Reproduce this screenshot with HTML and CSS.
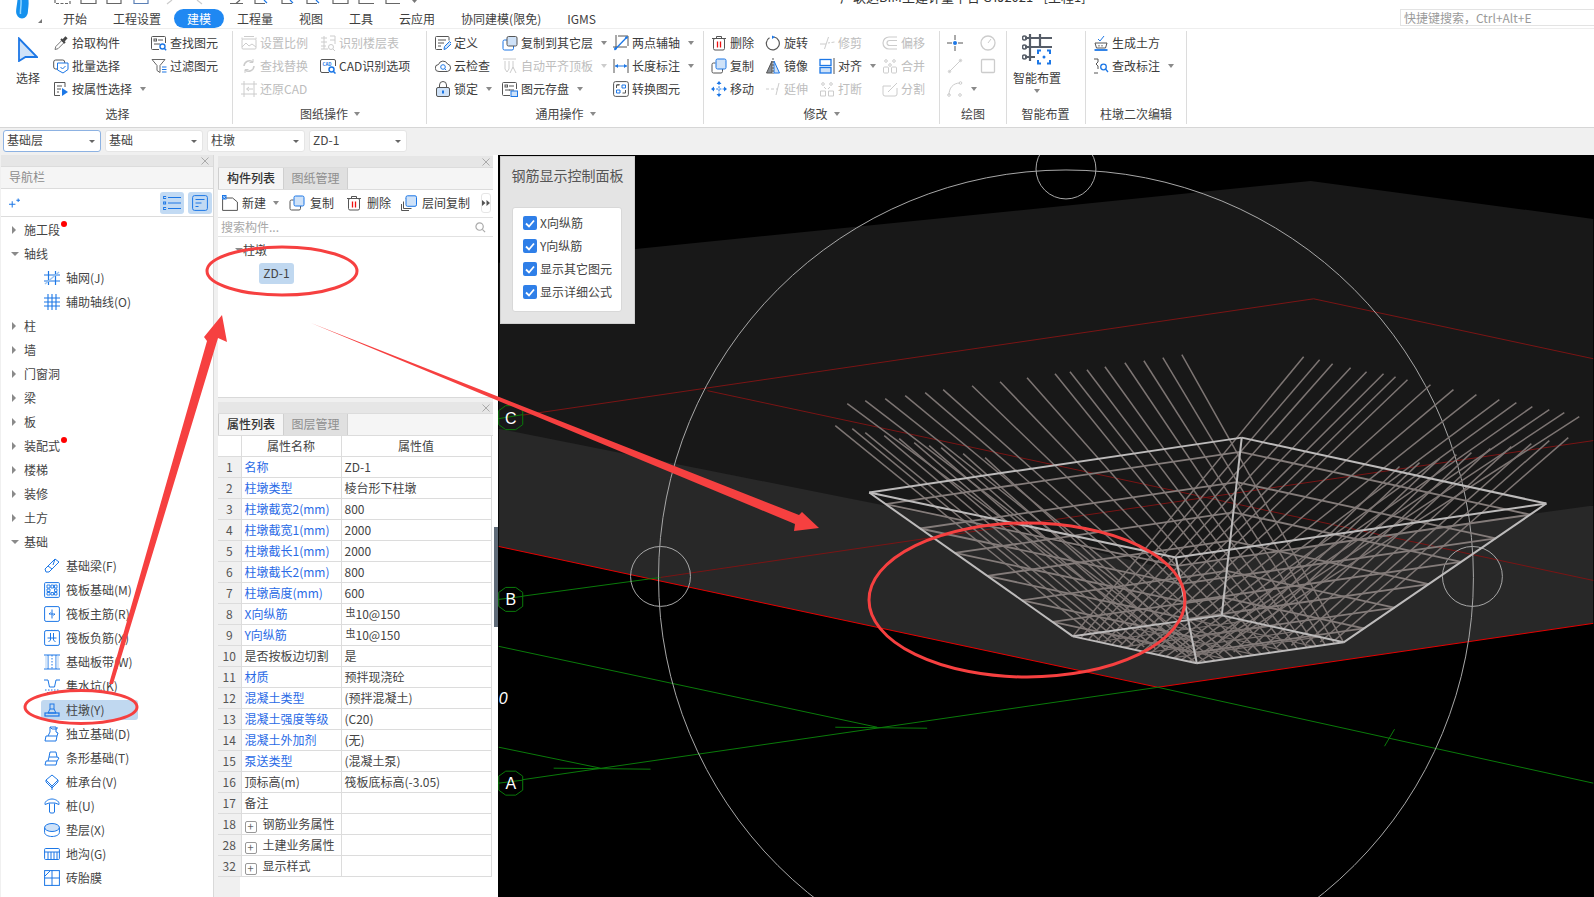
FILE: index.html
```html
<!DOCTYPE html>
<html lang="zh-CN">
<head>
<meta charset="utf-8">
<title>GTJ2021</title>
<link rel="stylesheet" href="styles.css">
</head>
<body>
<svg class="sprite" xmlns="http://www.w3.org/2000/svg">
<symbol id="i-close" viewBox="0 0 8 8"><path d="M.5 .5l7 7M7.500 .5l-7 7" stroke="#aaa" stroke-width="1"/></symbol>
<symbol id="i-pick" viewBox="0 0 16 16"><path d="M2 14.5l.8-3 6-6 2.2 2.2-6 6z" stroke="#777"/><path d="M8 4l4 4" stroke="#444" stroke-width="2"/><path d="M10.5 5.5l3-3.2" stroke="#444" stroke-width="3"/></symbol>
<symbol id="i-batch" viewBox="0 0 16 16"><rect x=".7" y="2" width="11" height="9" rx="2" stroke="#555"/><path d="M4.5 5h10.5v6.5L10 15l-5.5-3z" fill="#fff" stroke="#1c77e6"/><path d="M7.5 9l2 2 3-3" stroke="#1c77e6"/></symbol>
<symbol id="i-attr" viewBox="0 0 16 16"><path d="M12 6V1.5H1.5v13H7" stroke="#555"/><path d="M4 5h5M4 8h4M4 11h2" stroke="#555"/><path d="M9 7l6 4-6 4z" fill="#1c77e6"/></symbol>
<symbol id="i-find" viewBox="0 0 16 16"><path d="M8 14.5H1.5a1 1 0 0 1-1-1v-11a1 1 0 0 1 1-1h12a1 1 0 0 1 1 1V8" stroke="#555"/><rect x="3" y="4" width="2.5" height="2" stroke="#555"/><path d="M7 5h5M3 9h6" stroke="#555"/><circle cx="11.5" cy="11.5" r="2.5" stroke="#1c77e6" stroke-width="1.4"/><path d="M13.2 13.2l2 2" stroke="#1c77e6" stroke-width="1.4"/></symbol>
<symbol id="i-filter" viewBox="0 0 16 16"><path d="M1 1.5h13L9 7.5v7l-3-2v-5z" stroke="#666"/><path d="M11 9h4.500M11 11.500h4.500M11 14h4.500" stroke="#1c77e6" stroke-width="1.200"/></symbol>
<symbol id="i-scale" viewBox="0 0 16 16"><path d="M1 4V2.500M15 4V2.500M3 1.500h10" stroke="#ccc"/><rect x="1" y="4" width="14" height="10" rx="1" stroke="#ccc"/><path d="M1 12l4-4 3 3 3-2 4 3" stroke="#ccc"/></symbol>
<symbol id="i-floor" viewBox="0 0 16 16"><path d="M1 3h6M1 7h6M1 11h5M4 1v13M1 14h7M10 1h5v8M10 5h5" stroke="#ccc"/><circle cx="11" cy="12" r="2.500" stroke="#ccc"/><path d="M13 14l2 2" stroke="#ccc"/></symbol>
<symbol id="i-replace" viewBox="0 0 16 16"><path d="M3 8a5.500 5.500 0 0 1 9-4M13 8a5.500 5.500 0 0 1-9 4" stroke="#ccc" stroke-width="1.500"/><path d="M12 1v3.500H8.500M4 15v-3.500h3.500" stroke="#ccc"/></symbol>
<symbol id="i-cad" viewBox="0 0 16 16"><path d="M9 14.500H2a1.500 1.500 0 0 1-1.500-1.500V3A1.500 1.500 0 0 1 2 1.500h12A1.500 1.500 0 0 1 15.500 3v5" stroke="#555"/><text x="2.500" y="7.500" class="tiny">CAD</text><circle cx="11.500" cy="11.500" r="2.500" stroke="#1c77e6" stroke-width="1.500"/><path d="M13.200 13.200l2.300 2.300" stroke="#1c77e6" stroke-width="1.500"/></symbol>
<symbol id="i-restore" viewBox="0 0 16 16"><path d="M3 0v16M13 0v16M0 3h16M0 13h16M6 8h6M8 6l-2.500 2L8 10" stroke="#ccc"/></symbol>
<symbol id="i-def" viewBox="0 0 16 16"><path d="M14 5.500V2.500a1 1 0 0 0-1-1H1.500a1 1 0 0 0-1 1v11a1 1 0 0 0 1 1H7" stroke="#555"/><path d="M3 5h8M3 8h6M3 11h3" stroke="#555"/><path d="M9 14.500l.5-3 5-5 2 2-5 5z" fill="#cfe2f8" stroke="#1c77e6"/></symbol>
<symbol id="i-cloud" viewBox="0 0 16 16"><path d="M4 13.500a3.500 3.500 0 0 1-.5-7A4.800 4.800 0 0 1 12.500 6a3.800 3.800 0 0 1-.3 7.500z" stroke="#555"/><circle cx="8" cy="9" r="2.300" stroke="#1c77e6"/><path d="M9.700 10.700l1.500 1.500" stroke="#1c77e6"/></symbol>
<symbol id="i-lock" viewBox="0 0 16 16"><rect x="1.500" y="6.500" width="13" height="9" rx="1.500" fill="#cfe2f8" stroke="#555"/><path d="M4.500 6.500V4a3.500 3.500 0 0 1 7 0v2.500" stroke="#555"/><rect x="7" y="9.500" width="2" height="3" fill="#1c77e6"/></symbol>
<symbol id="i-copyto" viewBox="0 0 16 16"><path d="M5 5H2.500A1.500 1.500 0 0 0 1 6.500v7A1.500 1.500 0 0 0 2.500 15H10a1.500 1.500 0 0 0 1.500-1.500V11" stroke="#1c77e6"/><rect x="5" y="1.500" width="10" height="9.500" rx="1.500" fill="#cfe2f8" stroke="#555"/></symbol>
<symbol id="i-auto" viewBox="0 0 16 16"><path d="M1 1h13M3 3v8M7 3v8M11 3v8" stroke="#ccc"/><path d="M3 11l2 3 2-3M8 15l3-6 3 6" stroke="#ccc"/></symbol>
<symbol id="i-save" viewBox="0 0 16 16"><path d="M8 14.500H1.500a1 1 0 0 1-1-1v-11a1 1 0 0 1 1-1h12a1 1 0 0 1 1 1V8" stroke="#555"/><rect x="3" y="4" width="2.500" height="2" stroke="#555"/><path d="M7 5h5M3 9h5M7 9h5" stroke="#555"/><rect x="9" y="10" width="6.500" height="5.500" fill="#cfe2f8" stroke="#1c77e6"/></symbol>
<symbol id="i-two" viewBox="0 0 16 16"><path d="M3 0v14M0 12h14" stroke="#555"/><path d="M1.500 15L14 2" stroke="#1c77e6" stroke-width="1.300"/><path d="M5 1h10v10M3 3.500" stroke="#555"/><circle cx="2.500" cy="13.500" r="1.300" fill="#1c77e6"/><circle cx="13.500" cy="2.500" r="1.300" fill="#1c77e6"/></symbol>
<symbol id="i-len" viewBox="0 0 16 16"><path d="M1 1v14M15 1v14" stroke="#555"/><path d="M2 8h12" stroke="#1c77e6"/><path d="M2 8l3-2v4zM14 8l-3-2v4z" fill="#1c77e6"/></symbol>
<symbol id="i-conv" viewBox="0 0 16 16"><rect x=".6" y=".6" width="14.800" height="14.800" rx="2" stroke="#555"/><path d="M3.500 7V4h3M3.500 4l3-.5M12.500 9v3h-3" stroke="#555"/><path d="M9 4h3.500v3h-3.500zM3.500 9H7v3H3.500z" stroke="#1c77e6"/></symbol>
<symbol id="i-del" viewBox="0 0 16 16"><path d="M1 3.500h14M5.500 3.500V1.500h5v2" stroke="#555"/><rect x="2.500" y="3.500" width="11" height="11.500" rx="1.500" stroke="#555"/><path d="M6.500 6.500v6M9.500 6.500v6" stroke="#e11" stroke-width="1.300"/></symbol>
<symbol id="i-rot" viewBox="0 0 16 16"><path d="M9 2a6.500 6.500 0 1 1-4.500.8" stroke="#555" stroke-width="1.200"/><path d="M7 .5l3 1.500-3 2z" fill="#1c77e6"/></symbol>
<symbol id="i-trim" viewBox="0 0 16 16"><path d="M1 9h6M9 8l2-.3M12.500 7.500l3-.5M9.500 2l-4 12" stroke="#ccc"/></symbol>
<symbol id="i-off" viewBox="0 0 16 16"><path d="M15 2H7a6 6 0 0 0 0 12h8M15 5.500H7.500a2.500 2.500 0 0 0 0 5H15" stroke="#ccc" stroke-width="1.200"/></symbol>
<symbol id="i-copy" viewBox="0 0 16 16"><path d="M4.500 5H2.500A1.500 1.500 0 0 0 1 6.500v7A1.500 1.500 0 0 0 2.500 15H10a1.500 1.500 0 0 0 1.500-1.500V11" stroke="#555"/><rect x="5" y="1" width="10" height="10" rx="1.500" fill="#cfe2f8" stroke="#1c77e6"/></symbol>
<symbol id="i-mir" viewBox="0 0 16 16"><path d="M7 3L1.500 15H7z" fill="#8a8f96" stroke="#555"/><path d="M9 3l5.500 12H9z" fill="#cfe2f8" stroke="#1c77e6"/><path d="M8 0v16" stroke="#555" stroke-dasharray="2 1"/></symbol>
<symbol id="i-align" viewBox="0 0 16 16"><rect x="1" y="1.500" width="11" height="6" fill="#fff" stroke="#1c77e6" stroke-width="1.300"/><rect x="1" y="9.500" width="11" height="5.500" fill="#cfe2f8" stroke="#1c77e6" stroke-width="1.300"/><path d="M15 0v16" stroke="#555"/></symbol>
<symbol id="i-merge" viewBox="0 0 16 16"><circle cx="4" cy="3" r="1.300" stroke="#ccc"/><circle cx="12" cy="3" r="1.300" stroke="#ccc"/><circle cx="8" cy="7" r="1.300" stroke="#ccc"/><rect x="1.500" y="9" width="5" height="6" rx="1" stroke="#ccc"/><rect x="9.500" y="9" width="5" height="6" rx="1" stroke="#ccc"/></symbol>
<symbol id="i-move" viewBox="0 0 16 16"><path d="M8 2v12M2 8h12" stroke="#1c77e6" stroke-dasharray="2 1.200"/><path d="M8 0l2.500 3h-5zM8 16l-2.500-3h5zM0 8l3-2.500v5zM16 8l-3 2.500v-5z" fill="#1c77e6"/></symbol>
<symbol id="i-ext" viewBox="0 0 16 16"><path d="M1 8h3M6 8h3M11 8h2M14 2l-3 12" stroke="#ccc"/></symbol>
<symbol id="i-brk" viewBox="0 0 16 16"><circle cx="4" cy="3" r="1.300" stroke="#ccc"/><circle cx="12" cy="3" r="1.300" stroke="#ccc"/><path d="M1.500 10h5v5h-5zM9.500 10h5v5h-5z" stroke="#ccc"/><path d="M5 6l2 2M11 6L9 8" stroke="#ccc"/></symbol>
<symbol id="i-spl" viewBox="0 0 16 16"><path d="M15 7v6a2 2 0 0 1-2 2H3a2 2 0 0 1-2-2V5h8" stroke="#ccc"/><path d="M6 11l9-9" stroke="#ccc"/></symbol>
<symbol id="i-pt" viewBox="0 0 16 16"><path d="M8 0v5M8 11v5M0 8h5M11 8h5" stroke="#555"/><circle cx="8" cy="8" r="2" fill="#1c77e6"/></symbol>
<symbol id="i-cir" viewBox="0 0 16 16"><circle cx="8" cy="8" r="7" stroke="#ccc" stroke-width="1.300"/><path d="M8 8l3-4" stroke="#ccc"/></symbol>
<symbol id="i-lin" viewBox="0 0 16 16"><path d="M2 14L14 2" stroke="#ccc"/><circle cx="2.500" cy="13.500" r="1.200" stroke="#ccc"/><circle cx="13.500" cy="2.500" r="1.200" stroke="#ccc"/></symbol>
<symbol id="i-rec" viewBox="0 0 16 16"><rect x="1.500" y="1.500" width="13" height="13" rx="1" stroke="#ccc" stroke-width="1.300"/></symbol>
<symbol id="i-arc" viewBox="0 0 16 16"><path d="M2 14C2 7 6 2 13 2" stroke="#ccc"/><circle cx="2" cy="14" r="1.300" stroke="#ccc"/><circle cx="13.500" cy="2" r="1.300" stroke="#ccc"/><circle cx="13" cy="14" r="1.300" stroke="#ccc"/></symbol>
<symbol id="i-smart" viewBox="0 0 30 32"><path d="M8 0v27M18 0v12M3 4h27M3 13h27M3 23h10" stroke="#565d68" stroke-width="2.200"/><circle cx="2.500" cy="4" r="2" stroke="#565d68" stroke-width="1.500"/><circle cx="2.500" cy="13" r="2" stroke="#565d68" stroke-width="1.500"/><circle cx="2.500" cy="23" r="2" stroke="#565d68" stroke-width="1.500"/><path d="M16 20v-3.500h3M25 16.500h3v3.500M28 26v3.500h-3M19 29.500h-3V26" stroke="#1c77e6" stroke-width="2"/><circle cx="22" cy="23" r="1.500" fill="#1c77e6"/></symbol>
<symbol id="i-earth" viewBox="0 0 16 16"><path d="M2 8h12l-1.500 5h-9z" stroke="#555"/><path d="M1.500 15h13" stroke="#1c77e6" stroke-width="1.800"/><path d="M5 4l2 2 4-5" stroke="#1c77e6"/><path d="M6 10v1.500M9 10v1.500" stroke="#555"/></symbol>
<symbol id="i-mark" viewBox="0 0 16 16"><path d="M1 1h4v3l-2 2 2 2v3M5 15H1" stroke="#555"/><circle cx="10.500" cy="9" r="2.800" stroke="#1c77e6" stroke-width="1.300"/><path d="M12.500 11l2.500 3" stroke="#1c77e6" stroke-width="1.300"/></symbol>
<symbol id="i-axis" viewBox="0 0 16 16"><path d="M4.500 1v14M11.500 1v14M0 5h16M0 11h16" stroke="#1c77e6" stroke-width="1.200"/><path d="M1 14L15 2" stroke="#9cc3ef" stroke-width="1.500"/></symbol>
<symbol id="i-aux" viewBox="0 0 16 16"><path d="M4 0v16M8 0v16M12 0v16M0 4h16M0 8h16M0 12h16" stroke="#1c77e6" stroke-width="1.100"/></symbol>
<symbol id="i-beam" viewBox="0 0 16 16"><path d="M1 11L11 1l4 3-10 10H2zM11 1l-2 6M4 8l4 3" stroke="#1c77e6"/></symbol>
<symbol id="i-raft" viewBox="0 0 16 16"><rect x=".6" y=".6" width="14.800" height="14.800" rx="1" stroke="#1c77e6"/><path d="M3 3h3v3H3zM7 3h2.500v3H7zM10.500 3h2.500v3h-2.500zM3 7h3v2.500H3zM10.500 7h2.500v2.500h-2.500zM3 10.500h3V13H3zM7 10.500h2.500V13H7zM10.500 10.500h2.500V13h-2.500z" stroke="#1c77e6" stroke-width=".9"/></symbol>
<symbol id="i-main" viewBox="0 0 16 16"><rect x=".6" y=".6" width="14.800" height="14.800" rx="1.500" stroke="#1c77e6"/><path d="M8 3.500v9M5 8h6M5 8l1.500-1.500M11 8L9.500 9.500" stroke="#1c77e6"/></symbol>
<symbol id="i-neg" viewBox="0 0 16 16"><rect x=".6" y=".6" width="14.800" height="14.800" rx="1.500" stroke="#1c77e6"/><path d="M6.500 3v7l-2 2M9.500 3v7l2 2M3.500 8h9" stroke="#1c77e6"/></symbol>
<symbol id="i-band" viewBox="0 0 16 16"><path d="M0 1h16M0 15h16M4 1v14M12 1v14" stroke="#1c77e6"/><path d="M8 1v14" stroke="#1c77e6" stroke-dasharray="1.500 1.500"/><path d="M1 2h2.500v12H1zM12.500 2H15v12h-2.500z" fill="#d7e7f9"/></symbol>
<symbol id="i-pit" viewBox="0 0 16 16"><path d="M0 2h4l1.500 7h5L12 2h4" stroke="#1c77e6"/><path d="M1 12h14M3 14.500h10" stroke="#1c77e6" stroke-dasharray="1.500 1.500"/></symbol>
<symbol id="i-pier" viewBox="0 0 16 16"><rect x="6" y="2" width="4" height="5" stroke="#1c77e6"/><path d="M6 7l-2 4h8l-2-4" stroke="#1c77e6"/><rect x="1" y="11" width="14" height="3" stroke="#1c77e6" stroke-width="1.200"/></symbol>
<symbol id="i-iso" viewBox="0 0 16 16"><path d="M1 15l1-5h11l-1 5zM4 10l2-4V1h6v5l2 1-1 3M6 1l2 2h5v-2" stroke="#1c77e6"/></symbol>
<symbol id="i-strip" viewBox="0 0 16 16"><path d="M1 15l1-4h11l-1 4zM4 11l1-4 1-5h6l1 5 2 1-2 3M5 7h8" stroke="#1c77e6"/></symbol>
<symbol id="i-cap" viewBox="0 0 16 16"><path d="M8 1l6 5-6 6-6-6zM2 6v2l6 6 6-6V6M8 12v4" stroke="#1c77e6"/></symbol>
<symbol id="i-pile" viewBox="0 0 16 16"><path d="M1 5.500C1 3 5 1 8 1s7 2 7 4.500v1L11 5H5L1 6.500zM5.500 5.500V14a1.500 1.500 0 0 0 1.500 1h2a1.500 1.500 0 0 0 1.500-1V5.500" stroke="#1c77e6"/></symbol>
<symbol id="i-pad" viewBox="0 0 16 16"><ellipse cx="8" cy="5.500" rx="7.400" ry="4" fill="#cfe2f8" stroke="#1c77e6"/><path d="M.6 5.500v5c0 2.200 3.300 4 7.400 4s7.400-1.800 7.400-4v-5" stroke="#1c77e6"/></symbol>
<symbol id="i-trench" viewBox="0 0 16 16"><rect x=".6" y="2.500" width="14.800" height="11" rx="1" stroke="#1c77e6"/><path d="M0 6h16M4 6v7M7 6v7M10 6v7M13 6v7" stroke="#1c77e6"/></symbol>
<symbol id="i-brick" viewBox="0 0 16 16"><rect x=".6" y=".6" width="14.800" height="14.800" stroke="#1c77e6"/><path d="M8 0v16M0 8h16" stroke="#1c77e6"/><path d="M1 6l5-5" stroke="#1c77e6"/></symbol>
<symbol id="i-new" viewBox="0 0 16 16"><path d="M.6 3h10l4.800 4v8.400H.6z" stroke="#555"/><rect x="0" y="0" width="4.500" height="4.500" fill="#1c77e6"/><path d="M1 1l2.500 2.500M3.500 1L1 3.500" stroke="#fff" stroke-width=".6"/></symbol>
<symbol id="i-lcopy" viewBox="0 0 16 16"><path d="M2.500 6.500v7h8M.5 9v6.500H8" stroke="#555"/><path d="M5 3.500v-.5" stroke="#555"/><rect x="5" y=".8" width="10.500" height="10.500" rx="1.500" fill="#cfe2f8" stroke="#1c77e6"/></symbol>
<symbol id="i-search" viewBox="0 0 12 12"><circle cx="5" cy="5" r="4" stroke="#aaa" stroke-width="1.300"/><path d="M8 8l3 3" stroke="#aaa" stroke-width="1.300"/></symbol>
<symbol id="i-star" viewBox="0 0 12 12"><path d="M0 8h7M3.500 4.500v7M8 3.500h4M10 1.500v4" stroke="#1c77e6" stroke-width="1.100"/></symbol>
<symbol id="i-list" viewBox="0 0 18 14"><path d="M5 1.500h13M5 7h13M5 12.500h13" stroke="#1c77e6" stroke-width="1.200"/><rect x=".6" y=".5" width="2" height="2" stroke="#1c77e6"/><rect x=".6" y="6" width="2" height="2" stroke="#1c77e6"/><rect x=".6" y="11.500" width="2" height="2" stroke="#1c77e6"/></symbol>
<symbol id="i-form" viewBox="0 0 16 16"><rect x=".6" y=".6" width="14.800" height="14.800" rx="2" stroke="#1c77e6"/><path d="M3.500 4.500h9M3.500 8h6M3.500 11.500h3" stroke="#1c77e6"/></symbol>
<symbol id="i-tick" viewBox="0 0 14 14"><path d="M3 7.500l3 3 5-6" stroke="#fff" stroke-width="1.800"/></symbol>
<symbol id="i-more" viewBox="0 0 8 6"><path d="M0 0l3.500 3L0 6zM4.500 0L8 3 4.500 6z" fill="#555"/></symbol>
</svg>

<div class="app">
  <header class="header">
    <div class="logo-col">
      <svg class="logo" viewBox="0 0 14 20"><path d="M1.500 0h11c.5 5-.5 9-.6 12a5.900 6.500 0 0 1-11.800 0C.000 9 1 5 1.500 0z" fill="#1591ee"/><path d="M5 0c.5 6-1 10-.5 14" stroke="#8fd4ff" stroke-width="1.500" fill="none"/></svg>
      <span class="logo-tri"></span>
    </div>
    <div class="header-main">
      <div class="title-row">
        <svg class="quick" viewBox="0 0 370 8">
          <g fill="none" stroke="#666" stroke-width="1.200">
            <path d="M5 0v3.500h15V0" stroke-dasharray="3 1.500"/><path d="M31 0v3.500h15V0M57 0v3.500h14V0"/><path d="M84 0v3.500h14V0" stroke="#5a7fb5"/>
            <path d="M117 4l5-4M152 4l-5-4" stroke="#ccc"/>
            <path d="M180 3.500h13M186 3.500L190 0M205 0v3.500h10M232 0v3.500h10M257 0v3.500h10M283 0v3.500h15V0M309 0v3.500h15M336 0v3.500h14"/>
            <path d="M214 0l3 3M240 0l3 3M266 0l3 3" stroke="#1c77e6"/>
          </g>
          <path d="M362 0h5l-2.500 3z" fill="#777"/>
        </svg>
        <span class="title">广联达BIM土建计量平台 GTJ2021 - [工程1]</span>
      </div>
      <div class="tabs-row">
        <span class="tab">开始</span><span class="tab">工程设置</span><span class="tab on">建模</span><span class="tab">工程量</span><span class="tab">视图</span><span class="tab">工具</span><span class="tab">云应用</span><span class="tab">协同建模(限免)</span><span class="tab">IGMS</span>
        <span class="quick-search">快捷键搜索，Ctrl+Alt+E</span>
      </div>
    </div>
  </header>

  <section class="ribbon">
    <div class="group g1">
      <div class="group-body">
        <div class="big b-select">
          <svg class="big-ic" viewBox="0 0 20 25" width="20" height="25"><path d="M1 1.500L19 20H7.500L1 24z" fill="#cfe2f8" stroke="#1c77e6" stroke-width="1.800"/></svg>
          <span>选择</span>
        </div>
        <div class="col w98">
          <div class="item"><svg class="ic"><use href="#i-pick"/></svg>拾取构件</div>
          <div class="item"><svg class="ic"><use href="#i-batch"/></svg>批量选择</div>
          <div class="item"><svg class="ic"><use href="#i-attr"/></svg>按属性选择<i class="caret"></i></div>
        </div>
        <div class="col">
          <div class="item"><svg class="ic"><use href="#i-find"/></svg>查找图元</div>
          <div class="item"><svg class="ic"><use href="#i-filter"/></svg>过滤图元</div>
        </div>
      </div>
      <div class="group-label">选择</div>
    </div>

    <div class="group g2">
      <div class="group-body">
        <div class="col w79">
          <div class="item off"><svg class="ic"><use href="#i-scale"/></svg>设置比例</div>
          <div class="item off"><svg class="ic"><use href="#i-replace"/></svg>查找替换</div>
          <div class="item off"><svg class="ic"><use href="#i-restore"/></svg>还原CAD</div>
        </div>
        <div class="col">
          <div class="item off"><svg class="ic"><use href="#i-floor"/></svg>识别楼层表</div>
          <div class="item"><svg class="ic"><use href="#i-cad"/></svg>CAD识别选项</div>
        </div>
      </div>
      <div class="group-label">图纸操作<i class="caret"></i></div>
    </div>

    <div class="group g3">
      <div class="group-body">
        <div class="col w67">
          <div class="item"><svg class="ic"><use href="#i-def"/></svg>定义</div>
          <div class="item"><svg class="ic"><use href="#i-cloud"/></svg>云检查</div>
          <div class="item"><svg class="ic"><use href="#i-lock"/></svg>锁定<i class="caret"></i></div>
        </div>
        <div class="col w111">
          <div class="item"><svg class="ic"><use href="#i-copyto"/></svg>复制到其它层<i class="caret"></i></div>
          <div class="item off"><svg class="ic"><use href="#i-auto"/></svg>自动平齐顶板<i class="caret"></i></div>
          <div class="item"><svg class="ic"><use href="#i-save"/></svg>图元存盘<i class="caret"></i></div>
        </div>
        <div class="col">
          <div class="item"><svg class="ic"><use href="#i-two"/></svg>两点辅轴<i class="caret"></i></div>
          <div class="item"><svg class="ic"><use href="#i-len"/></svg>长度标注<i class="caret"></i></div>
          <div class="item"><svg class="ic"><use href="#i-conv"/></svg>转换图元</div>
        </div>
      </div>
      <div class="group-label">通用操作<i class="caret"></i></div>
    </div>

    <div class="group g4">
      <div class="group-body">
        <div class="col w54">
          <div class="item"><svg class="ic"><use href="#i-del"/></svg>删除</div>
          <div class="item"><svg class="ic"><use href="#i-copy"/></svg>复制</div>
          <div class="item"><svg class="ic"><use href="#i-move"/></svg>移动</div>
        </div>
        <div class="col w54">
          <div class="item"><svg class="ic"><use href="#i-rot"/></svg>旋转</div>
          <div class="item"><svg class="ic"><use href="#i-mir"/></svg>镜像</div>
          <div class="item off"><svg class="ic"><use href="#i-ext"/></svg>延伸</div>
        </div>
        <div class="col w63">
          <div class="item off"><svg class="ic"><use href="#i-trim"/></svg>修剪</div>
          <div class="item"><svg class="ic"><use href="#i-align"/></svg>对齐<i class="caret"></i></div>
          <div class="item off"><svg class="ic"><use href="#i-brk"/></svg>打断</div>
        </div>
        <div class="col">
          <div class="item off"><svg class="ic"><use href="#i-off"/></svg>偏移</div>
          <div class="item off"><svg class="ic"><use href="#i-merge"/></svg>合并</div>
          <div class="item off"><svg class="ic"><use href="#i-spl"/></svg>分割</div>
        </div>
      </div>
      <div class="group-label">修改<i class="caret"></i></div>
    </div>

    <div class="group g5">
      <div class="group-body">
        <div class="col w33">
          <div class="item"><svg class="ic"><use href="#i-pt"/></svg></div>
          <div class="item"><svg class="ic"><use href="#i-lin"/></svg></div>
          <div class="item"><svg class="ic"><use href="#i-arc"/></svg><i class="caret"></i></div>
        </div>
        <div class="col">
          <div class="item"><svg class="ic"><use href="#i-cir"/></svg></div>
          <div class="item"><svg class="ic"><use href="#i-rec"/></svg></div>
        </div>
      </div>
      <div class="group-label">绘图</div>
    </div>

    <div class="group g6">
      <div class="group-body">
        <div class="big b-smart">
          <svg class="big-ic" width="30" height="32"><use href="#i-smart"/></svg>
          <span>智能布置</span>
          <i class="caret"></i>
        </div>
      </div>
      <div class="group-label">智能布置</div>
    </div>

    <div class="group g7">
      <div class="group-body">
        <div class="col">
          <div class="item"><svg class="ic"><use href="#i-earth"/></svg>生成土方</div>
          <div class="item"><svg class="ic"><use href="#i-mark"/></svg>查改标注<i class="caret"></i></div>
        </div>
      </div>
      <div class="group-label">柱墩二次编辑</div>
    </div>
  </section>

  <section class="selectors">
    <div class="dd focus">基础层<i class="caret"></i></div>
    <div class="dd">基础<i class="caret"></i></div>
    <div class="dd">柱墩<i class="caret"></i></div>
    <div class="dd">ZD-1<i class="caret"></i></div>
  </section>

  <main class="main">
    <aside class="nav">
      <div class="strip"><svg width="8" height="8"><use href="#i-close"/></svg></div>
      <div class="nav-title">导航栏</div>
      <div class="nav-tools">
        <svg class="star" width="11" height="11"><use href="#i-star"/></svg>
        <span class="nav-toggles">
          <span class="toggle"><svg width="18" height="14"><use href="#i-list"/></svg></span>
          <span class="toggle"><svg width="16" height="16"><use href="#i-form"/></svg></span>
        </span>
      </div>
      <div class="tree">
        <div class="node"><i class="tri-r"></i>施工段<b class="dot"></b></div>
        <div class="node"><i class="tri-d"></i>轴线</div>
        <div class="leaf"><svg class="ic"><use href="#i-axis"/></svg>轴网(J)</div>
        <div class="leaf"><svg class="ic"><use href="#i-aux"/></svg>辅助轴线(O)</div>
        <div class="node"><i class="tri-r"></i>柱</div>
        <div class="node"><i class="tri-r"></i>墙</div>
        <div class="node"><i class="tri-r"></i>门窗洞</div>
        <div class="node"><i class="tri-r"></i>梁</div>
        <div class="node"><i class="tri-r"></i>板</div>
        <div class="node"><i class="tri-r"></i>装配式<b class="dot"></b></div>
        <div class="node"><i class="tri-r"></i>楼梯</div>
        <div class="node"><i class="tri-r"></i>装修</div>
        <div class="node"><i class="tri-r"></i>土方</div>
        <div class="node"><i class="tri-d"></i>基础</div>
        <div class="leaf"><svg class="ic"><use href="#i-beam"/></svg>基础梁(F)</div>
        <div class="leaf"><svg class="ic"><use href="#i-raft"/></svg>筏板基础(M)</div>
        <div class="leaf"><svg class="ic"><use href="#i-main"/></svg>筏板主筋(R)</div>
        <div class="leaf"><svg class="ic"><use href="#i-neg"/></svg>筏板负筋(X)</div>
        <div class="leaf"><svg class="ic"><use href="#i-band"/></svg>基础板带(W)</div>
        <div class="leaf"><svg class="ic"><use href="#i-pit"/></svg>集水坑(K)</div>
        <div class="leaf sel"><svg class="ic"><use href="#i-pier"/></svg>柱墩(Y)</div>
        <div class="leaf"><svg class="ic"><use href="#i-iso"/></svg>独立基础(D)</div>
        <div class="leaf"><svg class="ic"><use href="#i-strip"/></svg>条形基础(T)</div>
        <div class="leaf"><svg class="ic"><use href="#i-cap"/></svg>桩承台(V)</div>
        <div class="leaf"><svg class="ic"><use href="#i-pile"/></svg>桩(U)</div>
        <div class="leaf"><svg class="ic"><use href="#i-pad"/></svg>垫层(X)</div>
        <div class="leaf"><svg class="ic"><use href="#i-trench"/></svg>地沟(G)</div>
        <div class="leaf"><svg class="ic"><use href="#i-brick"/></svg>砖胎膜</div>
      </div>
    </aside>

    <div class="mid">
      <section class="panel comp">
        <div class="strip"><svg width="8" height="8"><use href="#i-close"/></svg></div>
        <div class="tabs2"><span class="t2 on">构件列表</span><span class="t2">图纸管理</span></div>
        <div class="comp-tools">
          <span class="tool t-new"><svg class="ic"><use href="#i-new"/></svg>新建<i class="caret"></i></span>
          <span class="tool t-copy"><svg class="ic"><use href="#i-copy"/></svg>复制</span>
          <span class="tool t-del"><svg class="ic"><use href="#i-del"/></svg>删除</span>
          <span class="tool t-lcopy"><svg class="ic"><use href="#i-lcopy"/></svg>层间复制</span>
          <span class="more"><svg width="8" height="6"><use href="#i-more"/></svg></span>
        </div>
        <div class="comp-search">搜索构件...<svg width="11" height="11"><use href="#i-search"/></svg></div>
        <div class="comp-tree">
          <div class="ct-head"><i class="tri-d"></i>柱墩</div>
          <div class="ct-item">ZD-1</div>
        </div>
      </section>

      <section class="panel props">
        <div class="strip"><svg width="8" height="8"><use href="#i-close"/></svg></div>
        <div class="tabs2"><span class="t2 on">属性列表</span><span class="t2">图层管理</span></div>
        <div class="props-body">
          <table class="ptable">
            <colgroup><col class="c1"><col class="c2"><col class="c3"></colgroup>
            <tr class="ph"><th class="n"></th><th>属性名称</th><th>属性值</th></tr>
            <tr><td class="n">1</td><td class="bl">名称</td><td>ZD-1</td></tr>
            <tr><td class="n">2</td><td class="bl">柱墩类型</td><td>棱台形下柱墩</td></tr>
            <tr><td class="n">3</td><td class="bl">柱墩截宽2(mm)</td><td>800</td></tr>
            <tr><td class="n">4</td><td class="bl">柱墩截宽1(mm)</td><td>2000</td></tr>
            <tr><td class="n">5</td><td class="bl">柱墩截长1(mm)</td><td>2000</td></tr>
            <tr><td class="n">6</td><td class="bl">柱墩截长2(mm)</td><td>800</td></tr>
            <tr><td class="n">7</td><td class="bl">柱墩高度(mm)</td><td>600</td></tr>
            <tr><td class="n">8</td><td class="bl">X向纵筋</td><td><span class="rebar">虫</span>10@150</td></tr>
            <tr><td class="n">9</td><td class="bl">Y向纵筋</td><td><span class="rebar">虫</span>10@150</td></tr>
            <tr><td class="n">10</td><td>是否按板边切割</td><td>是</td></tr>
            <tr><td class="n">11</td><td class="bl">材质</td><td>预拌现浇砼</td></tr>
            <tr><td class="n">12</td><td class="bl">混凝土类型</td><td>(预拌混凝土)</td></tr>
            <tr><td class="n">13</td><td class="bl">混凝土强度等级</td><td>(C20)</td></tr>
            <tr><td class="n">14</td><td class="bl">混凝土外加剂</td><td>(无)</td></tr>
            <tr><td class="n">15</td><td class="bl">泵送类型</td><td>(混凝土泵)</td></tr>
            <tr><td class="n">16</td><td>顶标高(m)</td><td>筏板底标高(-3.05)</td></tr>
            <tr><td class="n">17</td><td>备注</td><td></td></tr>
            <tr><td class="n">18</td><td><span class="exp">+</span>钢筋业务属性</td><td></td></tr>
            <tr><td class="n">28</td><td><span class="exp">+</span>土建业务属性</td><td></td></tr>
            <tr><td class="n">32</td><td><span class="exp">+</span>显示样式</td><td></td></tr>
          </table>
        </div>
      </section>
    </div>

    <div class="splitter"><span class="handle"></span></div>

    <div class="view">
      <svg class="scene" viewBox="498 154 1096 743">
        <polygon points="498,428 498,546 1158,687 1594,623 1594,505" fill="#282828"/>
        <polygon points="498,262 1311,180 1594,218 1594,505 1462,523 1300,548 1165,568 1010,530 498,428" fill="#181818"/>
        <g fill="none" stroke="#7a1414" stroke-width="1">
          <path d="M498 418L1314 298L1594 358"/>
          <path d="M707 390L1594 580"/>
          <path d="M660 577L1594 440"/>
        </g>
        <path d="M498 546L1158 687L1594 623" fill="none" stroke="#e60000" stroke-width="1"/>
        <g fill="none" stroke="#0a7a0a" stroke-width="1">
          <path d="M498 599L660 577"/>
          <path d="M498 646L877 727"/>
          <path d="M498 783L1158 687L1594 783"/>
          <path d="M498 747L600 768"/>
          <path d="M553 768L650 769M835 727L927 728M1385 746L1395 729"/>
        </g>
        <g fill="none" stroke="#a8a8a8" stroke-width="1">
          <circle cx="1066" cy="577" r="408"/>
          <circle cx="1066" cy="168" r="30"/>
          <circle cx="660" cy="576" r="30"/>
          <circle cx="1473" cy="576" r="30"/>
        </g>
        <g id="mesh" fill="none"></g>
        <g fill="none" stroke="#0a7a0a" stroke-width="1">
          <polygon points="515,405 522,410 522,424 515,429 505,429 498,424 498,410 505,405" fill="#181818"/>
          <polygon points="515,587 522,592 522,606 515,611 505,611 498,606 498,592 505,587" fill="#000"/>
          <polygon points="515,771 522,776 522,790 515,795 505,795 498,790 498,776 505,771" fill="#000"/>
        </g>
        <path d="M498 418L522 414M498 599L522 596M498 783L522 780" stroke="#0a7a0a" fill="none"/>
        <g class="bubble">
          <text x="510" y="423">C</text>
          <text x="510" y="605">B</text>
          <text x="510" y="789">A</text>
        </g>
        <text x="498" y="704" class="zero">0</text>
      </svg>

      <div class="rebar-panel">
        <div class="rp-title">钢筋显示控制面板</div>
        <div class="rp-box">
          <div class="rp-row"><span class="cb"><svg width="14" height="14"><use href="#i-tick"/></svg></span>X向纵筋</div>
          <div class="rp-row"><span class="cb"><svg width="14" height="14"><use href="#i-tick"/></svg></span>Y向纵筋</div>
          <div class="rp-row"><span class="cb"><svg width="14" height="14"><use href="#i-tick"/></svg></span>显示其它图元</div>
          <div class="rp-row"><span class="cb"><svg width="14" height="14"><use href="#i-tick"/></svg></span>显示详细公式</div>
        </div>
      </div>
    </div>
  </main>

  <svg class="marks" viewBox="0 0 1594 897">
    <polygon points="109,684 207,341 204,337 222,315 227,342 218,338 113,684" fill="#f64040"/>
    <polygon points="311,323 799,515 802,512 819,528 794,531 795,524" fill="#f64040"/>
    <g fill="none" stroke="#f64040" stroke-width="3">
      <ellipse cx="282" cy="271" rx="75" ry="24"/>
      <ellipse cx="81" cy="707" rx="56" ry="16.500"/>
      <ellipse cx="1027" cy="600" rx="158" ry="77"/>
    </g>
  </svg>
</div>
<script src="mesh.js"></script>
</body>
</html>
```

FILE: styles.css
```css
* { box-sizing: border-box; }
html, body { margin: 0; padding: 0; background: #f0f0f0; }
body { width: 1594px; height: 897px; overflow: hidden; }
.sprite { display: none; }

.app {
  position: relative;
  width: 1594px;
  height: 897px;
  display: flex;
  flex-direction: column;
  font: 12px/16px "Noto Sans CJK SC", "Liberation Sans", sans-serif;
  color: #3c3c3c;
  overflow: hidden;
}
i { font-style: normal; }
svg { fill: none; }
.ic { width: 16px; height: 16px; flex: none; }
.tiny { font-size: 4.500px; fill: #1c77e6; font-weight: 700; }

/* Header */
.header { display: flex; height: 29px; background: #fff; border-bottom: 1px solid #eeeeee; }
.logo-col { width: 50px; position: relative; flex: none; }
.logo { width: 14px; height: 20px; margin-left: 16px; display: block; }
.logo-tri {
  position: absolute; left: 38px; top: 19px;
  border-style: solid; border-width: 0 0 4px 4px;
  border-color: transparent transparent #777 transparent;
}
.header-main { flex: 1; display: flex; flex-direction: column; min-width: 0; }
.title-row { height: 8px; display: flex; align-items: flex-start; overflow: hidden; }
.quick { width: 370px; height: 8px; flex: none; }
.title {
  margin: -11px 0 0 420px;
  font-size: 13px; line-height: 15px; white-space: nowrap; color: #333;
}
.tabs-row { height: 20px; display: flex; align-items: flex-end; }
.tab {
  height: 19px; padding: 0 13px; line-height: 19px; color: #3f3f3f; flex: none; white-space: nowrap;
}
.tab.on { background: #1f88f2; color: #fff; border-radius: 10px; }
.quick-search {
  margin-left: auto; margin-bottom: 2px; width: 194px; height: 17px;
  border: 1px solid #e3e3e3; border-right: 0;
  color: #9a9a9a; line-height: 15px; padding-left: 3px;
}

/* Ribbon */
.ribbon { height: 99px; display: flex; background: #fff; border-bottom: 1px solid #d6d6d6; }
.group { position: relative; display: flex; flex-direction: column; flex: none; padding-top: 2px; }
.group::after {
  content: ""; position: absolute; right: 0; top: 2px; bottom: 3px; width: 1px; background: #dcdcdc;
}
.group-body { display: flex; height: 70px; }
.group-label {
  height: 26px; display: flex; align-items: center; justify-content: center; gap: 6px; color: #444; padding-right: 1px;
}
.g1 { width: 233px; padding-left: 10px; }
.g2 { width: 194px; padding-left: 8px; }
.g3 { width: 277px; padding-left: 8px; }
.g4 { width: 236px; padding-left: 7px; }
.g5 { width: 67px; padding-left: 7px; }
.g6 { width: 79px; padding-left: 6px; }
.g7 { width: 101px; padding-left: 7px; }
.g1 .group-label, .g2 .group-label, .g3 .group-label, .g4 .group-label, .g5 .group-label, .g6 .group-label, .g7 .group-label { margin-left: -7px; }
.col { display: flex; flex-direction: column; flex: none; }
.w98 { width: 98px; } .w79 { width: 79px; } .w67 { width: 67px; } .w111 { width: 111px; }
.w54 { width: 54px; } .w63 { width: 63px; } .w33 { width: 33px; }
.item { height: 23px; display: flex; align-items: center; gap: 3px; white-space: nowrap; color: #3c3c3c; }
.item.off { color: #bdbdbd; }
.item.off .caret { border-top-color: #ccc; }
.caret {
  display: inline-block; width: 0; height: 0; margin-left: 5px; flex: none;
  border-style: solid; border-width: 4px 3.500px 0; border-color: #8a8a8a transparent transparent;
}
.group-label .caret { margin-left: 0; }
.big { display: flex; flex-direction: column; align-items: center; flex: none; }
.b-select { width: 36px; margin-right: 7px; padding-top: 6px; }
.b-select span { margin-top: 8px; }
.b-smart { width: 48px; padding-top: 3px; margin-left: 0; }
.b-smart span { margin-top: 4px; white-space: nowrap; }
.b-smart .caret { margin: 3px 0 0; }

/* Selector row */
.selectors { height: 27px; background: #f0f0f0; display: flex; gap: 4px; padding: 2px 0 3px 3px; flex: none; }
.dd {
  width: 98px; height: 22px; background: #fff; border: 1px solid #e5e5e5; border-radius: 3px;
  display: flex; align-items: center; justify-content: space-between; padding: 0 5px 2px 3px; color: #444;
}
.dd.focus { border-color: #8db2e2; }
.dd .caret { border-top-color: #666; border-width: 3.500px 3px 0; margin-top: 2px; }

/* Main */
.main { flex: 1; display: flex; min-height: 0; background: #f0f0f0; }
.nav {
  width: 213px; margin-left: 1px; margin-right: 4px; flex: none; background: #fff; border-right: 1px solid #d9d9d9;
  display: flex; flex-direction: column;
}
.strip {
  height: 11px; flex: none; background: #e6e6e6; display: flex; align-items: center; justify-content: flex-end; padding-right: 4px;
}
.nav-title {
  height: 23px; flex: none; background: #f5f5f5; color: #8c8c8c; line-height: 20px; padding-left: 8px;
  border-top: 1px solid #dcdcdc; border-bottom: 1px solid #dcdcdc;
}
.nav-tools {
  height: 28px; flex: none; display: flex; align-items: center; justify-content: space-between;
  padding: 0 1px 0 8px; border-bottom: 1px solid #dcdcdc;
}
.nav-toggles { display: flex; gap: 4px; }
.toggle {
  width: 24px; height: 22px; background: #c2daf3; border-radius: 3px; display: flex; align-items: center; justify-content: center;
}
.tree { padding-top: 1px; color: #444; display: flex; flex-direction: column; }
.node { height: 24px; flex: none; display: flex; align-items: center; padding-left: 23px; position: relative; }
.tri-r, .tri-d { position: absolute; width: 0; height: 0; border-style: solid; }
.tri-r { left: 11px; top: 8px; border-width: 4px 0 4px 4px; border-color: transparent transparent transparent #8a8a8a; }
.tri-d { left: 10px; top: 10px; border-width: 4px 4px 0; border-color: #8a8a8a transparent transparent; }
.dot { position: absolute; left: 60px; top: 3px; width: 6px; height: 6px; border-radius: 50%; background: #f00; }
.leaf {
  height: 20px; flex: none; margin: 2px 0 2px 40px; padding-left: 3px; width: 97px; display: flex; align-items: center; gap: 6px;
  white-space: nowrap; border-radius: 3px;
}
.leaf.sel { background: #c0d8f0; }

.mid { width: 275px; flex: none; display: flex; flex-direction: column; gap: 4px; padding-top: 1px; }
.panel { background: #fff; display: flex; flex-direction: column; }
.comp { height: 242px; border-bottom: 1px solid #d9d9d9; flex: none; }
.props { flex: 1; min-height: 0; }
.panel .strip { padding-right: 3px; }
.tabs2 { height: 23px; flex: none; display: flex; background: #f5f5f5; border-top: 1px solid #dcdcdc; border-bottom: 1px solid #dcdcdc; }
.t2 {
  width: 64px; text-align: center; line-height: 19px; background: #e0e0e0; color: #8f8f8f; border-right: 1px solid #cfcfcf;
}
.t2.on { width: 66px; background: #f5f5f5; color: #333; font-weight: 500; border-left: 1px solid #cfcfcf; }
.comp-tools { height: 28px; flex: none; display: flex; align-items: center; border-bottom: 1px solid #e2e2e2; padding-left: 4px; padding-bottom: 1px; }
.tool { display: flex; align-items: center; gap: 5px; white-space: nowrap; flex: none; }
.t-new { width: 67px; gap: 4px; } .t-copy { width: 57px; } .t-del { width: 55px; } .t-lcopy { width: 80px; }
.t-new .caret { margin-left: 3px; }
.more {
  width: 10px; height: 20px; border: 1px solid #e6e6e6; border-radius: 3px; flex: none; display: flex; align-items: center; justify-content: center;
}
.more svg { flex: none; }
.comp-search {
  height: 19px; flex: none; display: flex; align-items: center; justify-content: space-between; color: #a8a8a8; padding: 0 7px 0 3px;
  border-bottom: 1px solid #e2e2e2;
}
.comp-tree { flex: 1; position: relative; padding-left: 25px; padding-top: 3px; }
.ct-head { height: 20px; display: flex; align-items: center; position: relative; }
.ct-head .tri-d { left: -8px; top: 8px; }
.ct-item {
  margin: 3px 0 0 16px; width: 35px; height: 21px; line-height: 20px; text-align: center; border-radius: 3px;
  background: #c0d8f0; color: #444;
}
.props-body { flex: 1; min-height: 0; background: linear-gradient(90deg, #f0f0f0 22px, #fff 22px); overflow: hidden; }
.ptable { border-collapse: collapse; table-layout: fixed; width: 273px; }
.c1 { width: 23px; } .c2 { width: 100px; } .c3 { width: 150px; }
.ptable td, .ptable th {
  height: 21px; padding: 0 0 0 3px; border: 1px solid #dcdcdc; border-width: 0 1px 1px 0;
  font-weight: 400; white-space: nowrap; overflow: hidden; color: #444; line-height: 18px;
}
.ptable th { text-align: center; background: #fff; padding: 0; height: 20px; }
.ptable .n { background: #f0f0f0; text-align: center; padding: 0; color: #555; }
.ptable th.n { background: #fff; }
.ptable .bl { color: #2a6be6; }
.rebar { font-size: 10px; line-height: 0; position: relative; top: -3px; margin-left: 1px; }
.exp {
  display: inline-block; width: 12px; height: 12px; border: 1px solid #999; border-radius: 2px; line-height: 9px; text-align: center;
  font-size: 11px; margin-right: 6px; vertical-align: -2px; color: #666;
}

.splitter { width: 5px; flex: none; background: #fff; padding: 372px 0 0 1px; }
.handle {
  display: block; width: 4px; height: 100px; background: #5f6b78;
}

.view { flex: 1; position: relative; background: #000; overflow: hidden; min-width: 0; }
.scene { display: block; width: 100%; height: 100%; }
.bubble text { fill: #fff; font: 400 16px "Liberation Sans", sans-serif; text-anchor: middle; }
.zero { fill: #fff; font: italic 400 16px "Liberation Sans", sans-serif; }
.mesh-bar { stroke: #7d7573; stroke-width: 1.500; }
.mesh-ring { stroke: #847c7a; stroke-width: 1.800; }
.mesh-grid { stroke: #7a7270; stroke-width: 1.200; }
.mesh-out { stroke: #bdbbbb; stroke-width: 2; }

.rebar-panel {
  position: absolute; left: 2px; top: 1px; width: 135px; height: 168px; background: #e4e4e4;
  border: 1px solid #d0d0d0; padding-top: 8px;
}
.rp-title { font-size: 14px; line-height: 20px; text-align: center; color: #555; white-space: nowrap; }
.rp-box {
  margin: 22px 0 0 11px; width: 110px; height: 105px; background: #fff; border: 1px solid #d8d8d8; border-radius: 3px;
  padding: 8px 0 0 10px; display: flex; flex-direction: column; gap: 9px;
}
.rp-row { height: 14px; display: flex; align-items: center; gap: 3px; white-space: nowrap; color: #444; }
.cb { width: 14px; height: 14px; background: #2f7fe8; border-radius: 2px; display: block; flex: none; }
.cb svg { display: block; }

.marks { position: absolute; left: 0; top: 0; width: 1594px; height: 897px; pointer-events: none; }
```

FILE: mesh.js
```js
// Draws the rebar cage of the pier: interpolated wall rings and crossing bar families.
(function () {
  var NS = 'http://www.w3.org/2000/svg';
  var host = document.getElementById('mesh');
  var rim = [[869, 492], [1242, 437], [1547, 503], [1176, 557]];
  var base = [[1073, 636], [1222, 615], [1344, 642], [1197, 663]];
  var P = base[0], Q = base[1], R = base[2], S = base[3];

  function mix(a, b, t) { return [a[0] + (b[0] - a[0]) * t, a[1] + (b[1] - a[1]) * t]; }
  function line(a, b, cls) {
    var el = document.createElementNS(NS, 'line');
    el.setAttribute('x1', a[0].toFixed(1));
    el.setAttribute('y1', a[1].toFixed(1));
    el.setAttribute('x2', b[0].toFixed(1));
    el.setAttribute('y2', b[1].toFixed(1));
    el.setAttribute('class', cls);
    host.appendChild(el);
  }
  function fan(tops, from, to) {
    tops.forEach(function (top, i) {
      line(top, mix(from, to, i / (tops.length - 1)), 'mesh-bar');
    });
  }

  fan([[847,403],[865,400],[885,398],[905,395],[925,392],[943,389],[972,385],[1000,381],[1027,377],[1055,373],[1070,371],[1087,369],[1105,366],[1125,362],[1144,360],[1163,357],[1182,354]], S, R);
  fan([[1304,356],[1320,359],[1333,363],[1351,367],[1367,371],[1384,373],[1396,376],[1408,379],[1431,384],[1454,389],[1477,394],[1500,399],[1517,402],[1533,406],[1550,409],[1565,412],[1580,416]], P, S);
  fan([[835,425],[852,428],[865,432],[884,435],[899,438],[914,442],[929,445],[941,447],[963,453],[985,457]], [1100, 640], [1200, 655]);
  fan([[1569,437],[1550,440],[1532,443],[1512,446],[1491,448],[1472,452],[1457,454],[1440,458],[1420,462],[1400,466]], [1335, 640], [1205, 655]);

  [0.08, 0.25, 0.42, 0.58, 0.75, 0.9].forEach(function (t) {
    var c = rim.map(function (p, i) { return mix(p, base[i], t); });
    for (var i = 0; i < 4; i++) line(c[i], c[(i + 1) % 4], 'mesh-ring');
  });

  for (var k = 1; k < 5; k++) {
    var u = k / 5;
    line(mix(P, Q, u), mix(S, R, u), 'mesh-grid');
    line(mix(P, S, u), mix(Q, R, u), 'mesh-grid');
  }

  for (var j = 0; j < 4; j++) {
    line(rim[j], rim[(j + 1) % 4], 'mesh-out');
    line(base[j], base[(j + 1) % 4], 'mesh-out');
    line(rim[j], base[j], 'mesh-out');
  }
})();
```
